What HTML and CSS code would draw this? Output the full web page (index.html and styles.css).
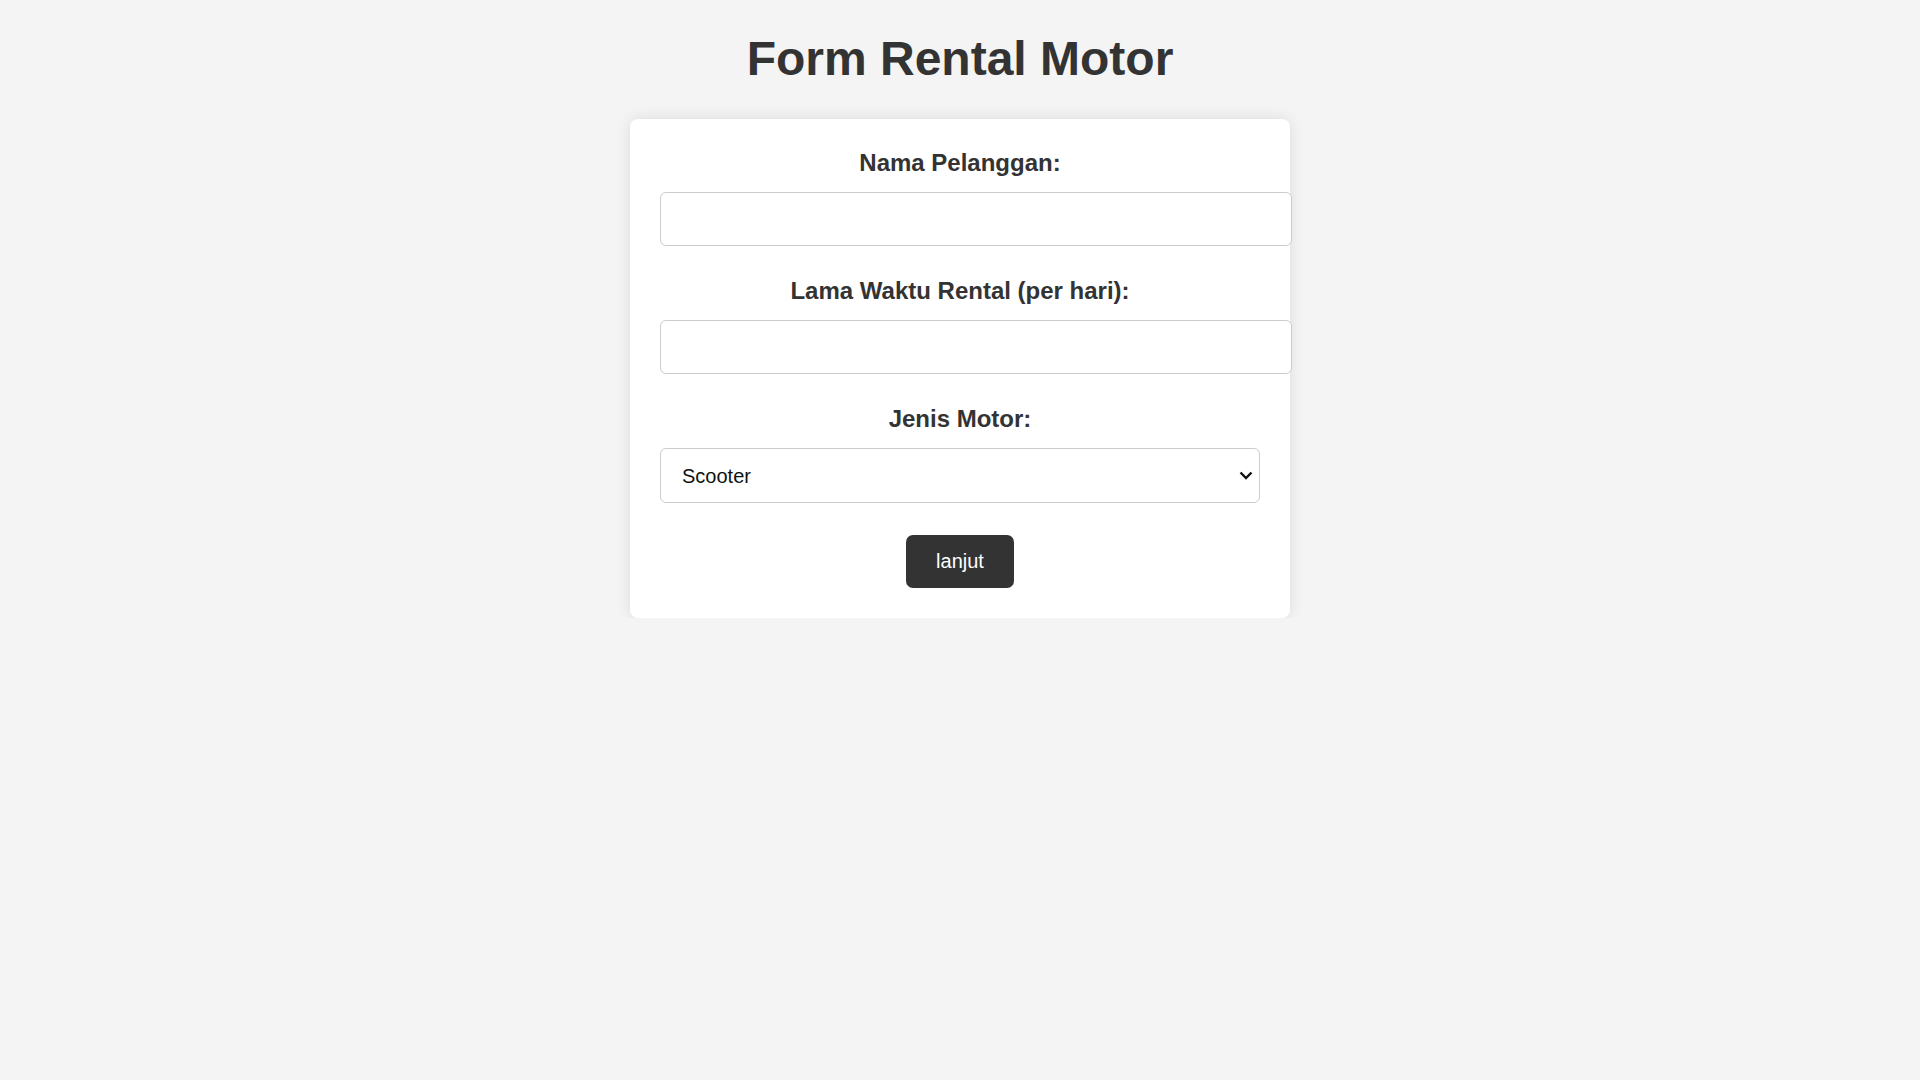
FILE: index.html
```html
<!DOCTYPE html>
<html lang="id">
<head>
<meta charset="utf-8">
<title>Form Rental Motor</title>
<link rel="stylesheet" href="styles.css">
</head>
<body>
<h1 class="title">Form Rental Motor</h1>
<form class="card">
  <label class="field-label" for="nama">Nama Pelanggan:</label>
  <input class="text-input" type="text" id="nama">
  <label class="field-label" for="lama">Lama Waktu Rental (per hari):</label>
  <input class="text-input" type="number" id="lama">
  <label class="field-label" for="jenis">Jenis Motor:</label>
  <div class="select-wrap">
    <select class="select" id="jenis">
      <option>Scooter</option>
      <option>Sport</option>
      <option>Bebek</option>
    </select>
    <svg class="chevron" width="14" height="9" viewBox="0 0 14 9"><path d="M1.5 1.5 L7 7 L12.5 1.5" fill="none" stroke="#111" stroke-width="2.4"/></svg>
  </div>
  <div class="actions">
    <button class="btn" type="button">lanjut</button>
  </div>
</form>
</body>
</html>
```
FILE: styles.css
```css
html, body {
  margin: 0;
  padding: 0;
}
body {
  background: #f4f4f4;
  font-family: "Liberation Sans", Arial, sans-serif;
  color: #333;
  padding-top: 31px;
}
.title {
  margin: 0 0 33px;
  font-size: 48px;
  line-height: 55px;
  font-weight: bold;
  text-align: center;
  color: #333;
}
.card {
  width: 600px;
  margin: 0 auto;
  padding: 30px;
  background: #fff;
  border-radius: 8px;
  box-shadow: 0 0 15px rgba(0, 0, 0, 0.1);
  display: flex;
  flex-direction: column;
  align-items: stretch;
}
.field-label {
  display: block;
  font-size: 24px;
  line-height: 28px;
  font-weight: bold;
  text-align: center;
  margin-bottom: 15px;
  color: #333;
}
.text-input {
  box-sizing: content-box;
  width: 100%;
  height: 22px;
  padding: 15px;
  border: 1px solid #ccc;
  border-radius: 6px;
  margin: 0 0 31px;
  font-family: "Liberation Sans", Arial, sans-serif;
  font-size: 20px;
  background: #fff;
  outline: none;
}
.select-wrap {
  position: relative;
  margin-bottom: 32px;
}
.select {
  -webkit-appearance: none;
  appearance: none;
  box-sizing: border-box;
  width: 100%;
  height: 55px;
  padding: 0 40px 0 21px;
  border: 1px solid #ccc;
  border-radius: 6px;
  background: #fff;
  font-family: "Liberation Sans", Arial, sans-serif;
  font-size: 20px;
  color: #111;
  outline: none;
}
.chevron {
  position: absolute;
  right: 7px;
  top: 23px;
  pointer-events: none;
}
.actions {
  display: flex;
  justify-content: center;
}
.btn {
  height: 53px;
  padding: 0 30px;
  border: none;
  border-radius: 7px;
  background: #333;
  color: #fff;
  font-family: "Liberation Sans", Arial, sans-serif;
  font-size: 20px;
  cursor: pointer;
}
```
